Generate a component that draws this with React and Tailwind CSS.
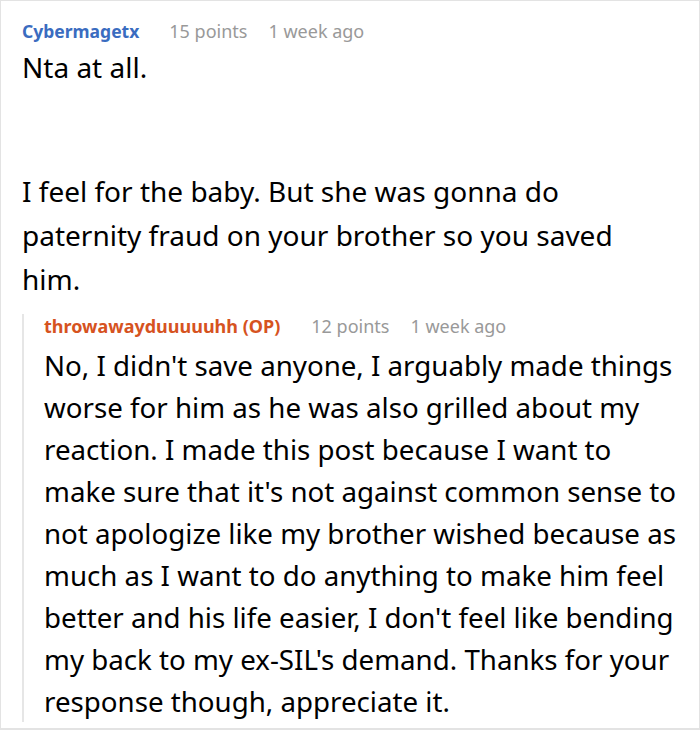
import React from "react";

const replyLines = [
  "No, I didn't save anyone, I arguably made things",
  "worse for him as he was also grilled about my",
  "reaction. I made this post because I want to",
  "make sure that it's not against common sense to",
  "not apologize like my brother wished because as",
  "much as I want to do anything to make him feel",
  "better and his life easier, I don't feel like bending",
  "my back to my ex-SIL's demand. Thanks for your",
  "response though, appreciate it.",
];

export default function App() {
  return (
    <div className="w-[700px] h-[730px] bg-white border border-[#e3e3e3] border-b-2 overflow-hidden" style={{ fontFamily: '"Noto Sans", sans-serif' }}>
      <div className="pl-[21px] pr-[10px] pt-[17px]">
        <div className="flex items-baseline text-[17.5px] leading-[26px]">
          <span className="font-bold text-[#3a6cc0]">Cybermagetx</span>
          <span className="ml-[30px] text-[#999999] text-[18px]">15 points</span>
          <span className="ml-[21px] text-[#999999] text-[18px]">1 week ago</span>
        </div>
        <div className="text-[28px] leading-[44px] text-black mt-[1px] pr-[19px]">
          <p>Nta at all.</p>
          <p className="mt-[80px]">I feel for the baby. But she was gonna do paternity fraud on your brother so you saved him.</p>
        </div>
        <div className="mt-[16px] border-l-2 border-[#e6e6e6] pl-[20px]">
          <div className="flex items-baseline text-[18px] leading-[24px] -mt-[3px]">
            <span className="font-bold text-[#d6531f]">throwawayduuuuuhh (OP)</span>
            <span className="ml-[31px] text-[#999999]">12 points</span>
            <span className="ml-[21px] text-[#999999]">1 week ago</span>
          </div>
          <p className="text-[27.7px] leading-[42px] text-black mt-[6px] -mb-[11px] whitespace-nowrap">
            {replyLines.map((line, i) => (
              <React.Fragment key={i}>
                {line}
                {i < replyLines.length - 1 && <br />}
              </React.Fragment>
            ))}
          </p>
        </div>
      </div>
    </div>
  );
}
